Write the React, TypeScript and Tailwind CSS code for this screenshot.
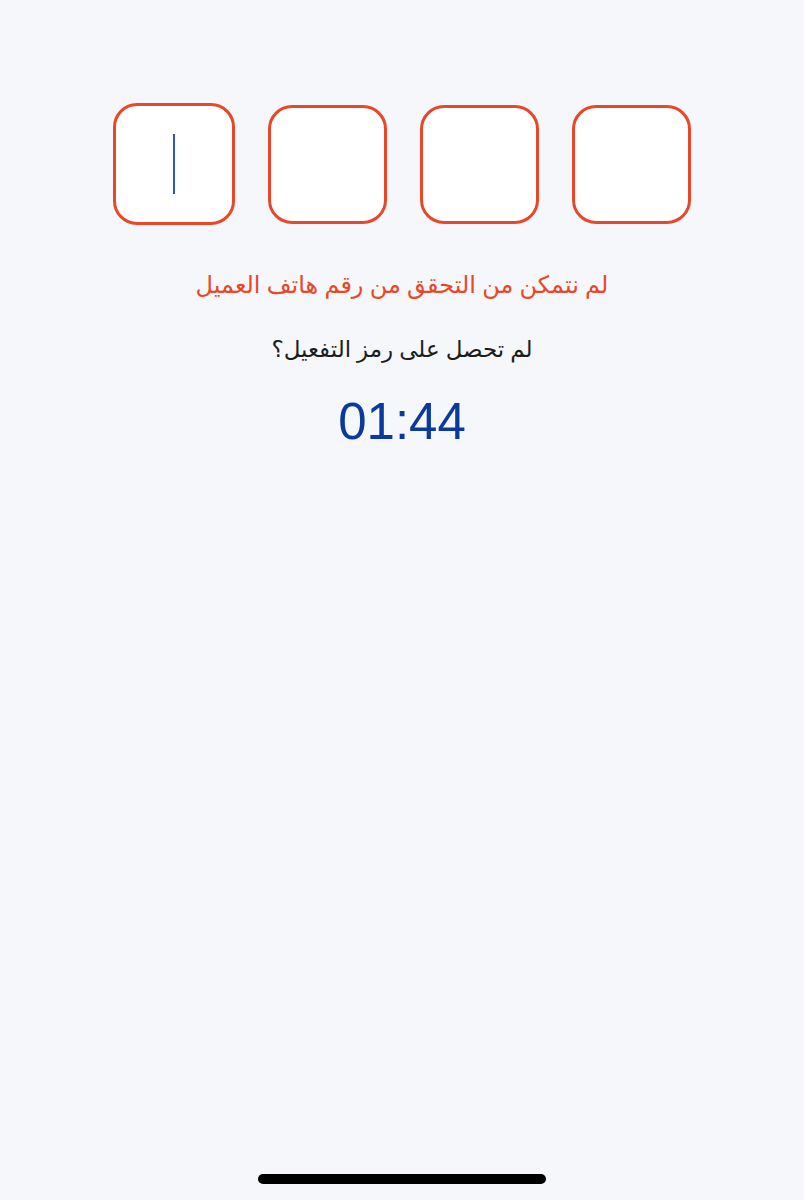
import { useState } from 'react';

const CODE_LENGTH = 4;

function CodeBox({ value, focused }: { value: string; focused: boolean }) {
  return (
    <div
      className={`flex items-center justify-center rounded-[24px] border-[3px] border-[#e8472a] bg-white ${
        focused ? 'h-[122px] w-[122px]' : 'h-[119px] w-[119px]'
      }`}
    >
      {focused && !value ? <span className="block h-[60px] w-[2px] bg-[#2f56b3]" /> : null}
      {value ? <span className="text-[40px] text-[#111]">{value}</span> : null}
    </div>
  );
}

export default function App() {
  const [digits] = useState<string[]>(Array(CODE_LENGTH).fill(''));
  const focusIndex = digits.findIndex((d) => d === '');

  return (
    <div
      className="flex min-h-[1200px] w-full flex-col items-center bg-[#f6f7fb]"
      style={{ fontFamily: '"Noto Sans", "DejaVu Sans", sans-serif' }}
    >
      <div className="mt-[103px] flex items-center gap-[33px]">
        {digits.map((d, i) => (
          <CodeBox key={i} value={d} focused={i === focusIndex} />
        ))}
      </div>

      <p dir="rtl" className="mt-[43px] text-[24px] leading-[32px] text-[#e8472a]">
        لم نتمكن من التحقق من رقم هاتف العميل
      </p>

      <p dir="rtl" className="mt-[32px] text-[23px] leading-[32px] text-[#1c1c1e]">
        لم تحصل على رمز التفعيل؟
      </p>

      <div
        className="mt-[28px] text-[51px] leading-[60px] text-[#0b3a9f]"
        style={{ fontFamily: '"Liberation Sans", Arial, sans-serif' }}
      >
        01:44
      </div>

      <div className="mt-auto mb-[16px] h-[10px] w-[288px] rounded-full bg-black" />
    </div>
  );
}
